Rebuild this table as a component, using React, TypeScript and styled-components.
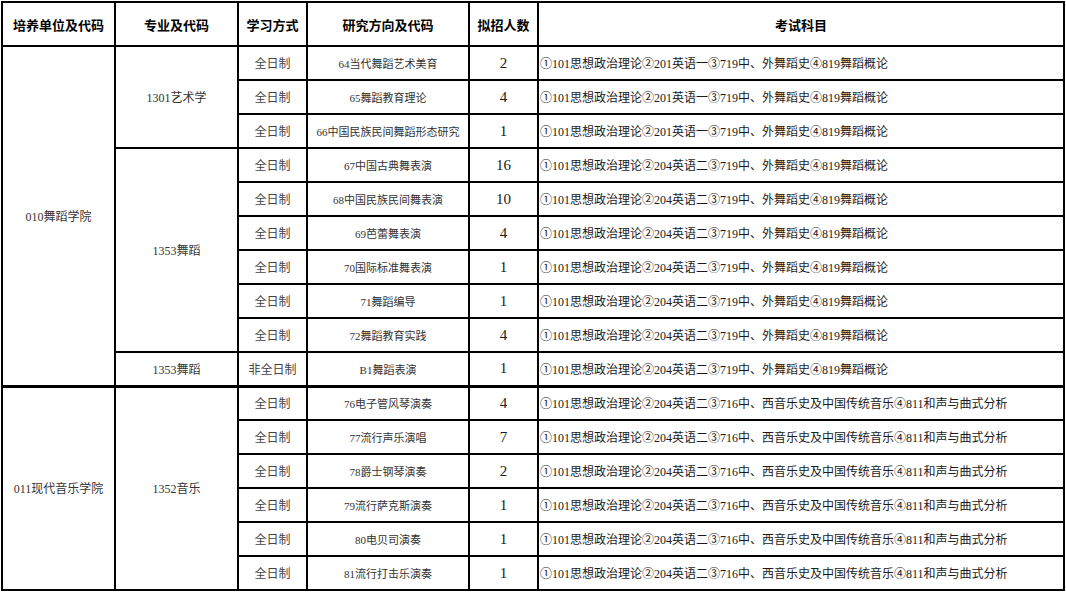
import React from 'react';
import styled, { createGlobalStyle } from 'styled-components';

const GlobalStyle = createGlobalStyle`
  html, body {
    margin: 0;
    padding: 0;
    background: #fff;
  }
  body {
    font-family: "Liberation Serif", "Noto Sans CJK SC", serif;
  }
`;

const Page = styled.div`
  padding: 1px 0 0 1px;
`;

const Table = styled.table`
  border-collapse: collapse;
  table-layout: fixed;
  width: 1062px;
`;

const HeadCell = styled.th`
  height: 42px;
  padding: 0;
  border: 2px solid #000;
  font-family: "Noto Sans CJK SC", sans-serif;
  font-weight: 700;
  font-size: 13px;
  color: #000;
  text-align: center;
  vertical-align: middle;
`;

const Row = styled.tr<{ $groupStart?: boolean }>`
  height: 34px;
  > td {
    border-top-width: ${p => (p.$groupStart ? '3px' : '2px')};
  }
`;

type Kind = 'unit' | 'mode' | 'dir' | 'count' | 'exam';

const Cell = styled.td<{ $kind: Kind }>`
  padding: 0;
  border: 2px solid #000;
  vertical-align: middle;
  text-align: ${p => (p.$kind === 'exam' ? 'left' : 'center')};
  padding-left: ${p => (p.$kind === 'exam' ? '1px' : '0')};
  white-space: nowrap;
  font-family: "Liberation Serif", "Noto Sans CJK SC", serif;
  font-size: ${p => (p.$kind === 'count' ? '15px' : p.$kind === 'dir' ? '11px' : '12px')};
  color: ${p => (p.$kind === 'mode' ? '#444' : p.$kind === 'exam' || p.$kind === 'count' ? '#1a1a1a' : '#333')};
`;

const EXAM_A = '①101思想政治理论②201英语一③719中、外舞蹈史④819舞蹈概论';
const EXAM_B = '①101思想政治理论②204英语二③719中、外舞蹈史④819舞蹈概论';
const EXAM_C = '①101思想政治理论②204英语二③716中、西音乐史及中国传统音乐④811和声与曲式分析';

type Line = {
  unit?: [string, number];
  major?: [string, number];
  mode: string;
  dir: string;
  count: string;
  exam: string;
};

const lines: Line[] = [
  { unit: ['010舞蹈学院', 10], major: ['1301艺术学', 3], mode: '全日制', dir: '64当代舞蹈艺术美育', count: '2', exam: EXAM_A },
  { mode: '全日制', dir: '65舞蹈教育理论', count: '4', exam: EXAM_A },
  { mode: '全日制', dir: '66中国民族民间舞蹈形态研究', count: '1', exam: EXAM_A },
  { major: ['1353舞蹈', 6], mode: '全日制', dir: '67中国古典舞表演', count: '16', exam: EXAM_B },
  { mode: '全日制', dir: '68中国民族民间舞表演', count: '10', exam: EXAM_B },
  { mode: '全日制', dir: '69芭蕾舞表演', count: '4', exam: EXAM_B },
  { mode: '全日制', dir: '70国际标准舞表演', count: '1', exam: EXAM_B },
  { mode: '全日制', dir: '71舞蹈编导', count: '1', exam: EXAM_B },
  { mode: '全日制', dir: '72舞蹈教育实践', count: '4', exam: EXAM_B },
  { major: ['1353舞蹈', 1], mode: '非全日制', dir: 'B1舞蹈表演', count: '1', exam: EXAM_B },
  { unit: ['011现代音乐学院', 6], major: ['1352音乐', 6], mode: '全日制', dir: '76电子管风琴演奏', count: '4', exam: EXAM_C },
  { mode: '全日制', dir: '77流行声乐演唱', count: '7', exam: EXAM_C },
  { mode: '全日制', dir: '78爵士钢琴演奏', count: '2', exam: EXAM_C },
  { mode: '全日制', dir: '79流行萨克斯演奏', count: '1', exam: EXAM_C },
  { mode: '全日制', dir: '80电贝司演奏', count: '1', exam: EXAM_C },
  { mode: '全日制', dir: '81流行打击乐演奏', count: '1', exam: EXAM_C },
];

const widths = [113, 123, 69, 162, 69, 526];
const heads = ['培养单位及代码', '专业及代码', '学习方式', '研究方向及代码', '拟招人数', '考试科目'];

export default function App() {
  return (
    <Page>
      <GlobalStyle />
      <Table>
        <colgroup>
          {widths.map((w, i) => (
            <col key={i} style={{ width: w }} />
          ))}
        </colgroup>
        <thead>
          <tr>
            {heads.map(h => (
              <HeadCell key={h}>{h}</HeadCell>
            ))}
          </tr>
        </thead>
        <tbody>
          {lines.map((l, i) => (
            <Row key={i} $groupStart={i === 10}>
              {l.unit && (
                <Cell $kind="unit" rowSpan={l.unit[1]}>
                  {l.unit[0]}
                </Cell>
              )}
              {l.major && (
                <Cell $kind="unit" rowSpan={l.major[1]}>
                  {l.major[0]}
                </Cell>
              )}
              <Cell $kind="mode">{l.mode}</Cell>
              <Cell $kind="dir">{l.dir}</Cell>
              <Cell $kind="count">{l.count}</Cell>
              <Cell $kind="exam">{l.exam}</Cell>
            </Row>
          ))}
        </tbody>
      </Table>
    </Page>
  );
}
